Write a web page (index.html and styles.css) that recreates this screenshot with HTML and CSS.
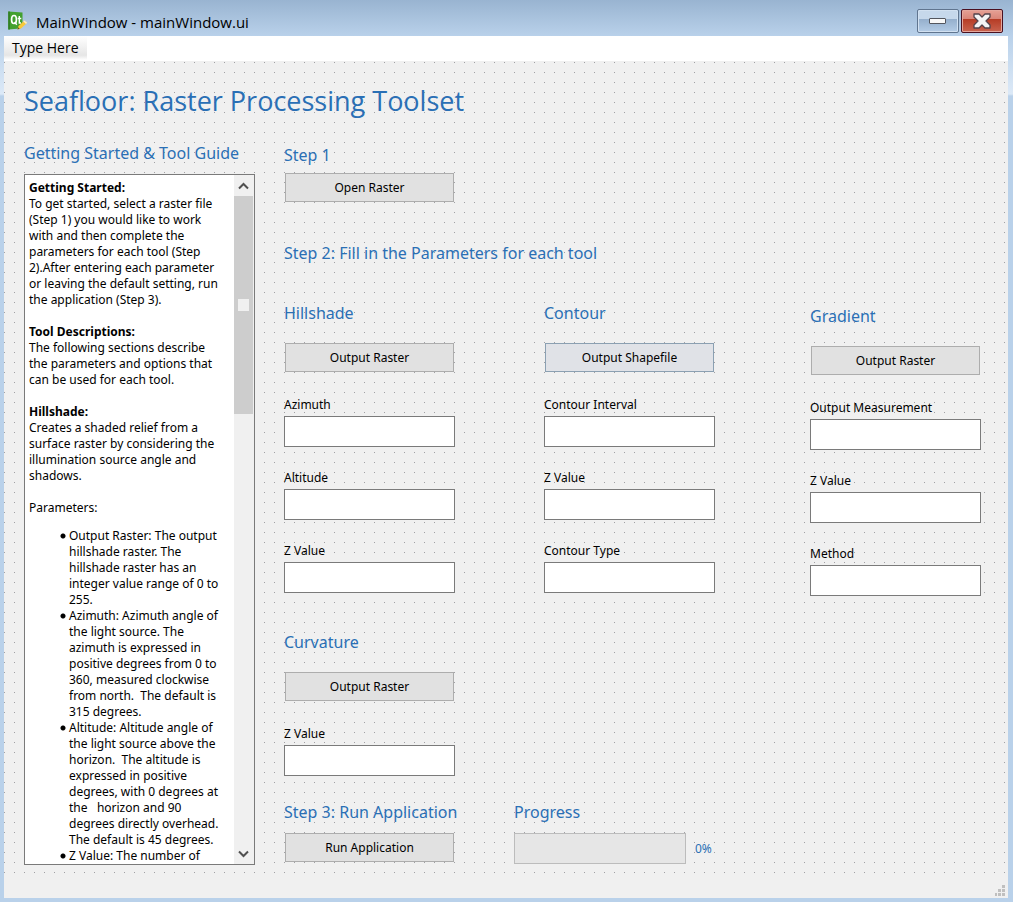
FILE: index.html
```html
<!DOCTYPE html>
<html lang="en">
<head>
<meta charset="utf-8">
<title>MainWindow - mainWindow.ui</title>
<link rel="stylesheet" href="styles.css">
</head>
<body>
<div class="window">
  <header class="titlebar">
    <svg class="app-icon" width="20" height="20" viewBox="0 0 20 20" aria-hidden="true">
      <path d="M0.300 0.500L14.500 1.500V14.500L12 17.500L0.300 18.500Z" fill="#43a02f"/>
      <path d="M0.300 0.500L1.800 0.600V18.400L0.300 18.500Z" fill="#2f7a22"/>
      <ellipse cx="6" cy="8.500" rx="2.400" ry="4" fill="none" stroke="#fff" stroke-width="1.700"/>
      <path d="M6.500 11L8.800 13.800M11.300 5V12H13M9.700 7.500H13.300" fill="none" stroke="#fff" stroke-width="1.400"/>
      <path d="M9.500 18.500L10.500 15L16.500 9.500L19.200 11.800L13 17.500Z" fill="#f7c93a"/>
      <path d="M16.500 9.500L19.200 11.800L18 12.900L15.300 10.600Z" fill="#f8ecd0"/>
      <path d="M9.500 18.500L10.200 16.300L11.700 17.800Z" fill="#6b5424"/>
    </svg>
    <h1 class="caption">MainWindow - mainWindow.ui</h1>
    <button class="win-btn" type="button" aria-label="Minimize">
      <svg width="18" height="8" viewBox="0 0 18 8"><rect x="0.500" y="1.500" width="16" height="5" rx="0.500" fill="#f8f8f8" stroke="#53565e"/></svg>
    </button>
    <button class="win-btn win-close" type="button" aria-label="Close">
      <svg width="18" height="16" viewBox="0 0 18 16"><path d="M1 1H6L9 4L12 1H17V4L13 8L17 12V15H12L9 12L6 15H1V12L5 8L1 4Z" fill="#f4f4f4" stroke="#53434b" stroke-width="1.300" stroke-linejoin="round"/></svg>
    </button>
  </header>
  <nav class="menubar"><button class="menu-item" type="button">Type Here</button></nav>
  <main class="canvas">
    <h2 class="title">Seafloor: Raster Processing Toolset</h2>
    <div class="layout">
      <section class="guide">
        <h3 class="heading">Getting Started &amp; Tool Guide</h3>
        <div class="guide-box">
          <div class="guide-text">
            <p><b>Getting Started:</b><br>To get started, select a raster file<br>(Step 1) you would like to work<br>with and then complete the<br>parameters for each tool (Step<br>2).After entering each parameter<br>or leaving the default setting, run<br>the application (Step 3).</p>
            <p><b>Tool Descriptions:</b><br>The following sections describe<br>the parameters and options that<br>can be used for each tool.</p>
            <p><b>Hillshade:</b><br>Creates a shaded relief from a<br>surface raster by considering the<br>illumination source angle and<br>shadows.</p>
            <p>Parameters:</p>
            <ul>
              <li>Output Raster: The output<br>hillshade raster. The<br>hillshade raster has an<br>integer value range of 0 to<br>255.</li>
              <li>Azimuth: Azimuth angle of<br>the light source. The<br>azimuth is expressed in<br>positive degrees from 0 to<br>360, measured clockwise<br>from north.&nbsp; The default is<br>315 degrees.</li>
              <li>Altitude: Altitude angle of<br>the light source above the<br>horizon.&nbsp; The altitude is<br>expressed in positive<br>degrees, with 0 degrees at<br>the &nbsp; horizon and 90<br>degrees directly overhead.<br>The default is 45 degrees.</li>
              <li>Z Value: The number of</li>
            </ul>
          </div>
          <div class="scrollbar">
            <button class="scroll-btn" type="button" aria-label="Scroll up"><svg width="11" height="8" viewBox="0 0 11 8"><path d="M1 6.500L5.500 2L10 6.500" fill="none" stroke="#505050" stroke-width="2"/></svg></button>
            <div class="thumb"><span class="handle"></span></div>
            <button class="scroll-btn scroll-down" type="button" aria-label="Scroll down"><svg width="11" height="8" viewBox="0 0 11 8"><path d="M1 1.500L5.500 6L10 1.500" fill="none" stroke="#505050" stroke-width="2"/></svg></button>
          </div>
        </div>
      </section>
      <div class="steps">
        <section class="step-one">
          <h3 class="heading">Step 1</h3>
          <button class="btn" type="button">Open Raster</button>
        </section>
        <h3 class="heading step-two">Step 2: Fill in the Parameters for each tool</h3>
        <div class="tools">
          <div class="tool-column">
            <section class="tool">
              <h4 class="heading">Hillshade</h4>
              <button class="btn" type="button">Output Raster</button>
              <label class="field">Azimuth<input type="text"></label>
              <label class="field">Altitude<input type="text"></label>
              <label class="field">Z Value<input type="text"></label>
            </section>
            <section class="tool">
              <h4 class="heading">Curvature</h4>
              <button class="btn" type="button">Output Raster</button>
              <label class="field">Z Value<input type="text"></label>
            </section>
          </div>
          <div class="tool-column">
            <section class="tool">
              <h4 class="heading">Contour</h4>
              <button class="btn btn-active" type="button">Output Shapefile</button>
              <label class="field">Contour Interval<input type="text"></label>
              <label class="field">Z Value<input type="text"></label>
              <label class="field">Contour Type<input type="text"></label>
            </section>
          </div>
          <div class="tool-column tool-column-low">
            <section class="tool">
              <h4 class="heading">Gradient</h4>
              <button class="btn" type="button">Output Raster</button>
              <label class="field">Output Measurement<input type="text"></label>
              <label class="field">Z Value<input type="text"></label>
              <label class="field">Method<input type="text"></label>
            </section>
          </div>
        </div>
        <div class="run-row">
          <section class="run">
            <h3 class="heading">Step 3: Run Application</h3>
            <button class="btn" type="button">Run Application</button>
          </section>
          <section class="progress">
            <h3 class="heading" id="progress-label">Progress</h3>
            <div class="progress-line">
              <div class="bar" role="progressbar" aria-labelledby="progress-label" aria-valuenow="0"></div>
              <span class="percent">0%</span>
            </div>
          </section>
        </div>
      </div>
    </div>
  </main>
  <footer class="statusbar">
    <svg width="11" height="12" viewBox="0 0 11 12" fill="#bfbfbf" aria-hidden="true"><path d="M8 0h3v3h-3zM4 4h3v3h-3zM8 4h3v3h-3zM1 8h2v3h-2zM4 8h3v3h-3zM8 8h3v3h-3z"/></svg>
  </footer>
</div>
</body>
</html>
```
FILE: styles.css
```css
* { box-sizing: border-box; }
body {
  margin: 0;
  font: 12px/16px "Noto Sans", sans-serif;
  color: #000;
}
h1, h2, h3, h4, p, ul { margin: 0; padding: 0; font-weight: normal; }
button, input { font: inherit; color: inherit; margin: 0; border-radius: 0; }

.window {
  display: flex;
  flex-direction: column;
  height: 100vh;
  min-height: 902px;
  padding: 0 5px 4px 4px;
  background: linear-gradient(#99b4d1 0, #b9d1ea 36px, #dce9f7 94px, #b9d1ea 96px);
}
.titlebar {
  display: flex;
  align-items: flex-start;
  height: 36px;
  padding: 9px 5px 0 4px;
  gap: 2px;
}
.app-icon { margin-top: 2px; flex: none; }
.caption {
  flex: 1;
  margin-left: 6px;
  font: 15px/26px "Open Sans", sans-serif;
}
.win-btn {
  display: flex;
  align-items: center;
  justify-content: center;
  width: 42px;
  height: 24px;
  padding: 0;
  border: 1px solid #60758f;
  border-radius: 2px;
  background: linear-gradient(#c6d8eb 0 42%, #95afcc 42%, #b4cce6);
  box-shadow: inset 0 0 0 1px #d2e1f1;
}
.win-close {
  border-color: #4a1020;
  background: linear-gradient(#e6a195 0, #d98477 42%, #b63c25 42%, #c96450);
  box-shadow: inset 0 0 0 1px #e4a79d;
}
.menubar { display: flex; height: 25px; background: #fff; }
.menu-item {
  height: 24px;
  padding: 0 8px;
  border: 0;
  font: 14px/24px "Open Sans", sans-serif;
  background: linear-gradient(#fff, #e6e6e6 80%, #fff);
}
.canvas {
  flex: 1;
  min-height: 0;
  display: flex;
  flex-direction: column;
  padding: 20px 27px 0 20px;
  background: conic-gradient(from 270deg at 1px 1px, #a0a0a4 90deg, transparent 0) 0 1px / 10px 10px, #f0f0f0;
}
.title { font: 27px/40px "Open Sans", sans-serif; color: #2a6fb5; }
.heading { font-size: 16px; line-height: 20px; color: #2a6fb5; white-space: nowrap; }
.layout { flex: 1; min-height: 0; display: flex; gap: 29px; padding: 22px 0 12px; }

.guide { flex: none; width: 231px; display: flex; flex-direction: column; gap: 11px; }
.guide-box {
  flex: 1;
  min-height: 0;
  display: flex;
  border: 1px solid #7a7a7a;
  background: #fff;
  overflow: hidden;
}
.guide-text { flex: 1; padding: 5px 0 0 4px; white-space: nowrap; overflow: hidden; }
.guide-text p { margin-bottom: 16px; }
.guide-text ul { margin-top: -4px; padding-left: 30px; list-style: none; }
.guide-text li {
  padding-left: 10px;
  background: radial-gradient(circle at 4px 8px, #000 2px, transparent 3px);
}
.guide-text b { font-weight: bold; }
.scrollbar { flex: none; width: 20px; display: flex; flex-direction: column; background: #f0f0f0; }
.scroll-btn {
  height: 21px;
  padding: 0 1px 0 0;
  border: 0;
  background: #f0f0f0;
  display: flex;
  align-items: center;
  justify-content: center;
}
.scroll-down { margin-top: auto; }
.thumb {
  height: 218px;
  margin-right: 1px;
  background: #cdcdcd;
  display: flex;
  align-items: center;
  justify-content: center;
}
.handle { width: 11px; height: 12px; background: #f0f0f0; }

.steps { flex: 1; min-width: 0; padding-top: 2px; }
.btn {
  display: block;
  width: calc(100% - 2px);
  height: 29px;
  margin: 0 1px;
  padding: 0;
  border: 1px solid #adadad;
  background: #e1e1e1;
}
.btn-active { border-color: #8ba0b2; background: #e0e2e7; }
.step-one { width: 171px; }
.step-one .btn { margin-top: 8px; }
.step-two { margin-top: 41px; }
.tools { display: flex; margin-top: 40px; }
.tool-column { flex: 1; min-width: 0; }
.tool-column + .tool-column { margin-left: 89px; }
.tool-column + .tool-column-low { margin-left: 95px; padding-top: 3px; }
.tool .btn { margin-top: 20px; }
.tool + .tool { margin-top: 39px; }
.field { display: block; margin-top: 23px; }
.btn + .field { margin-top: 25px; }
.field input {
  display: block;
  width: 100%;
  height: 31px;
  margin-top: 3px;
  padding: 0 4px;
  border: 1px solid #7a7a7a;
  background: #fff;
}
.run-row { display: flex; gap: 59px; margin-top: 26px; }
.run { width: 171px; }
.run .btn, .progress-line { margin-top: 11px; }
.progress-line { display: flex; align-items: center; gap: 9px; }
.bar { width: 172px; height: 31px; border: 1px solid #bcbcbc; background: #e6e6e6; }
.percent { color: #2a6fb5; }
.statusbar {
  display: flex;
  justify-content: flex-end;
  align-items: flex-end;
  height: 21px;
  padding: 0 3px 1px 0;
  background: #f0f0f0;
}
```
